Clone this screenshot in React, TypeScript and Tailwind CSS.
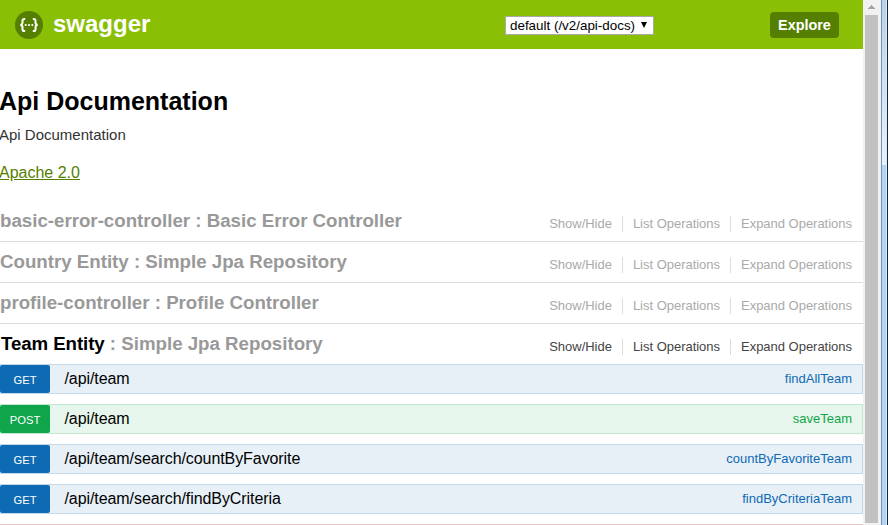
type Operation = { method: 'GET' | 'POST'; path: string; name: string };

const resources = [
  { name: 'basic-error-controller', description: 'Basic Error Controller', active: false },
  { name: 'Country Entity', description: 'Simple Jpa Repository', active: false },
  { name: 'profile-controller', description: 'Profile Controller', active: false },
  { name: 'Team Entity', description: 'Simple Jpa Repository', active: true },
];

const operations: Operation[] = [
  { method: 'GET', path: '/api/team', name: 'findAllTeam' },
  { method: 'POST', path: '/api/team', name: 'saveTeam' },
  { method: 'GET', path: '/api/team/search/countByFavorite', name: 'countByFavoriteTeam' },
  { method: 'GET', path: '/api/team/search/findByCriteria', name: 'findByCriteriaTeam' },
];

function Logo() {
  return (
    <svg width="28" height="28" viewBox="0 0 28 28" fill="none">
      <circle cx="14" cy="14" r="14" fill="#547f00" />
      <path
        d="M10.2 7.9H9.4C8 7.9 7.5 8.6 7.5 9.8V11.6C7.5 13 6.9 13.8 5.4 14C6.9 14.2 7.5 15 7.5 16.4V18.2C7.5 19.4 8 20.1 9.4 20.1H10.2M17.8 7.9H18.6C20 7.9 20.5 8.6 20.5 9.8V11.6C20.5 13 21.1 13.8 22.6 14C21.1 14.2 20.5 15 20.5 16.4V18.2C20.5 19.4 20 20.1 18.6 20.1H17.8"
        stroke="#fff"
        strokeWidth="2"
      />
      <circle cx="10.7" cy="14" r="1.1" fill="#fff" />
      <circle cx="14" cy="14" r="1.1" fill="#fff" />
      <circle cx="17.3" cy="14" r="1.1" fill="#fff" />
    </svg>
  );
}

function Header() {
  return (
    <header className="flex h-[49px] items-start bg-[#89bf04]">
      <div className="flex flex-1 gap-[10px] pt-[11px] pl-[15px]">
        <Logo />
        <span className="-mt-px text-[24px] leading-7 font-bold text-white">swagger</span>
      </div>
      <div className="mt-4 mr-[116px] flex h-[19px] w-[149px] items-center justify-between border border-[#a9a9a9] bg-white pr-[6px] pl-1 text-[13.4px] leading-[17px] text-black">
        <span className="whitespace-nowrap">default (/v2/api-docs)</span>
        <svg width="6" height="6" viewBox="0 0 6 6" className="-mt-px shrink-0">
          <path d="M0 0H6L3 6Z" fill="#000" />
        </svg>
      </div>
      <button className="mt-3 mr-6 h-[26px] w-[69px] rounded-[4px] bg-[#547f00] text-[14.4px] leading-[26px] font-bold text-white">
        Explore
      </button>
    </header>
  );
}

function Resource({ name, description, active }: (typeof resources)[number]) {
  return (
    <li className={`flex justify-between ${active ? 'h-10' : 'h-[41px] border-b border-[#dddddd]'}`}>
      <h2 className="pt-2 text-[18.7px] leading-6 font-bold whitespace-nowrap text-[#999999]">
        <span className={active ? 'pl-px tracking-[-0.08px] text-black' : ''}>{name}</span> : {description}
      </h2>
      <ul
        className={`mt-[15px] mr-[11px] flex h-4 text-[13px] leading-4 tracking-[-0.02px] whitespace-nowrap ${active ? 'text-[#444444]' : 'text-[#aaaaaa]'}`}
      >
        <li className="pr-[10px]">Show/Hide</li>
        <li className="border-l border-[#dddddd] px-[10px]">List Operations</li>
        <li className="border-l border-[#dddddd] pl-[10px]">Expand Operations</li>
      </ul>
    </li>
  );
}

function OperationRow({ method, path, name }: Operation) {
  const get = method === 'GET';
  return (
    <li
      className={`flex h-[30px] justify-between border border-l-0 ${get ? 'border-[#c3d9ec] bg-[#e7f0f7]' : 'border-[#c3e8d1] bg-[#e7f6ec]'}`}
    >
      <div className="flex">
        <span
          className={`h-7 w-[50px] rounded-[2px] pt-px text-center text-[11.2px] leading-[29px] text-white ${get ? 'bg-[#0f6ab4]' : 'bg-[#10a54a]'}`}
        >
          {method}
        </span>
        <span className="pl-[14.5px] text-[16px] leading-7 tracking-[-0.08px] text-black">{path}</span>
      </div>
      <span className={`pr-[10px] text-[13px] leading-7 ${get ? 'text-[#0f6ab4]' : 'text-[#10a54a]'}`}>{name}</span>
    </li>
  );
}

function Scrollbar() {
  return (
    <div className="w-[18px] bg-[#f1f1f1] pl-[2px]">
      <div className="flex h-[15px] w-[13px] items-center justify-center">
        <svg width="7" height="4" viewBox="0 0 7 4" className="-mt-px" shapeRendering="crispEdges">
          <path d="M3 0H4V1H5V2H6V3H7V4H0V3H1V2H2V1H3Z" fill="#a3a3a3" />
        </svg>
      </div>
      <div className="h-[508px] w-[13px] bg-[#c1c1c1]" />
    </div>
  );
}

function WindowEdge() {
  return (
    <div className="flex w-[7px]">
      <div className="w-px bg-[#7593b5]" />
      <div className="flex w-[4px] flex-col">
        <div className="h-[165px] bg-linear-to-b from-[#b9d1ea] to-[#e9f2fb]" />
        <div className="flex-1 bg-[#b4d4f7]" />
      </div>
      <div className="w-px bg-[#d9e8f5]" />
      <div className="w-px bg-[#1c2836]" />
    </div>
  );
}

export default function App() {
  return (
    <div className="flex h-[525px] w-[888px] overflow-hidden bg-white font-['Liberation_Sans',Arial,sans-serif]">
      <main className="h-[525px] w-[863px] overflow-hidden">
        <Header />
        <section className="-ml-px h-[152px] pt-[36px]">
          <h1 className="text-[25px] leading-8 font-bold text-black">Api Documentation</h1>
          <p className="mt-[8px] text-[15px] leading-5 text-[#333333]">Api Documentation</p>
          <a className="mt-[18px] block text-[16px] leading-5 text-[#547f00] underline">Apache 2.0</a>
        </section>
        <ul>
          {resources.map((r) => (
            <Resource key={r.name} {...r} />
          ))}
        </ul>
        <ul className="flex flex-col gap-[10px]">
          {operations.map((o) => (
            <OperationRow key={o.name} {...o} />
          ))}
          <li className="h-[30px] shrink-0 border border-[#e8c6c7] bg-[#f5e8e8]" />
        </ul>
      </main>
      <Scrollbar />
      <WindowEdge />
    </div>
  );
}
